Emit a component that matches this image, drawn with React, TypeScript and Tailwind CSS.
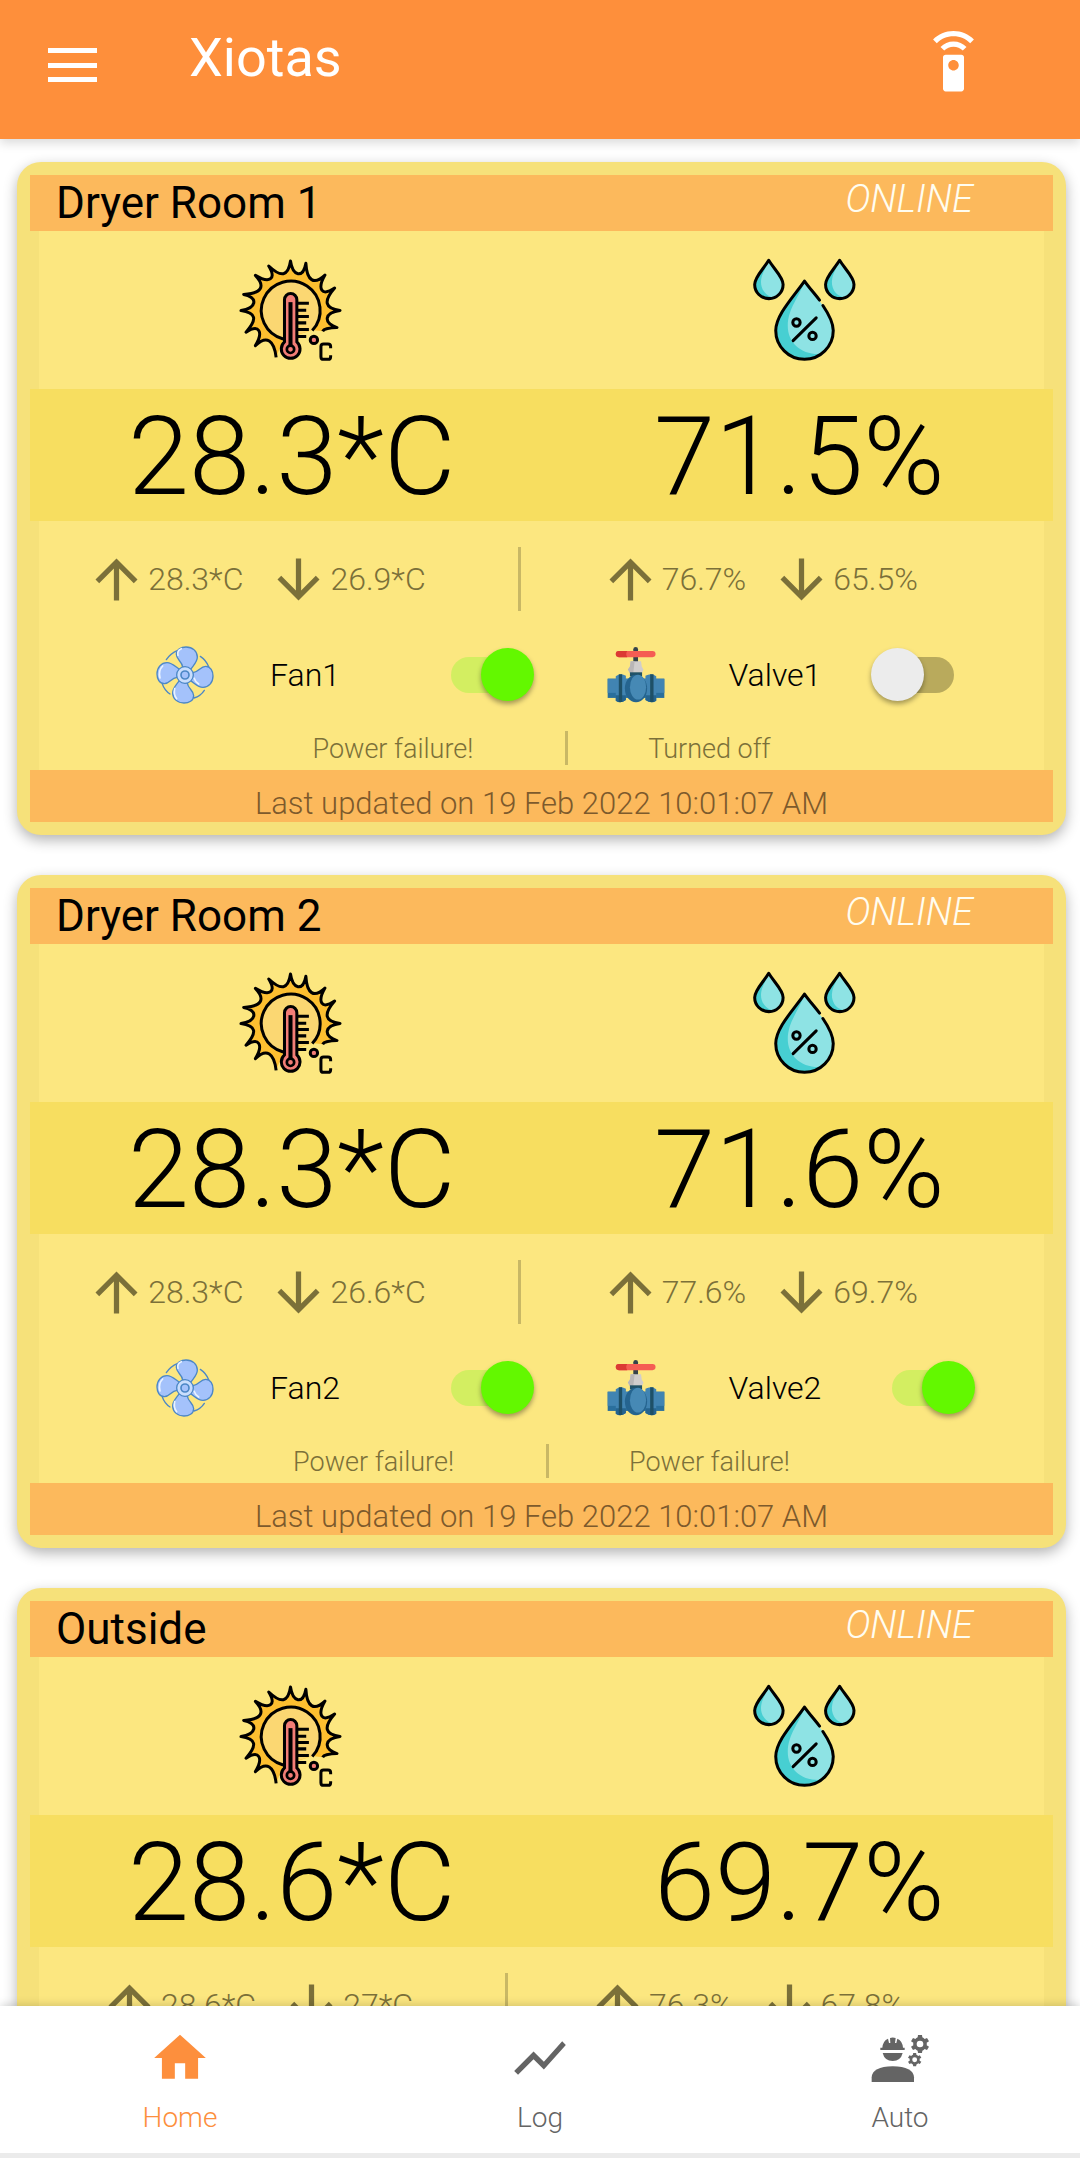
import React, { useState } from "react";
import {
  MdArrowDownward,
  MdArrowUpward,
  MdHome,
  MdSettingsRemote,
  MdShowChart,
} from "react-icons/md";

type Device = { kind: "fan" | "valve"; name: string; on: boolean; status: string };

type Room = {
  name: string;
  temp: string;
  tempMax: string;
  tempMin: string;
  hum: string;
  humMax: string;
  humMin: string;
  devices: Device[];
  updated?: string;
};

const rooms: Room[] = [
  {
    name: "Dryer Room 1",
    temp: "28.3*C",
    tempMax: "28.3*C",
    tempMin: "26.9*C",
    hum: "71.5%",
    humMax: "76.7%",
    humMin: "65.5%",
    devices: [
      { kind: "fan", name: "Fan1", on: true, status: "Power failure!" },
      { kind: "valve", name: "Valve1", on: false, status: "Turned off" },
    ],
    updated: "19 Feb 2022 10:01:07 AM",
  },
  {
    name: "Dryer Room 2",
    temp: "28.3*C",
    tempMax: "28.3*C",
    tempMin: "26.6*C",
    hum: "71.6%",
    humMax: "77.6%",
    humMin: "69.7%",
    devices: [
      { kind: "fan", name: "Fan2", on: true, status: "Power failure!" },
      { kind: "valve", name: "Valve2", on: true, status: "Power failure!" },
    ],
    updated: "19 Feb 2022 10:01:07 AM",
  },
  {
    name: "Outside",
    temp: "28.6*C",
    tempMax: "28.6*C",
    tempMin: "27*C",
    hum: "69.7%",
    humMax: "76.3%",
    humMin: "67.8%",
    devices: [],
  },
];

// Each ray is [tip angle, base angle]; the two differ where a ray curls.
const rayAngles = [
  [253, 245],
  [225, 222],
  [206, 199],
  [180, 180],
  [161, 154],
  [135, 132],
  [116, 110],
  [90, 90],
  [72, 65],
  [46, 43],
  [27, 20],
  [0, 0],
  [-20, -24],
];

function polar(angle: number, radius: number) {
  const rad = (angle * Math.PI) / 180;
  return `${Math.round(212 + radius * Math.cos(rad))} ${Math.round(212 - radius * Math.sin(rad))}`;
}

function sunRays() {
  let d = `M${polar(rayAngles[0][0], 146)}`;
  for (let i = 1; i < rayAngles.length; i++) {
    const [tip, base] = rayAngles[i];
    d += `C${polar(rayAngles[i - 1][1] - 4, 102)} ${polar(base + 4, 102)} ${polar(tip, 148)}`;
  }
  return `${d}Q${polar(-27, 114)} ${polar(-33, 114)}`;
}

const rays = sunRays();

function TemperatureIcon() {
  return (
    <svg viewBox="55 55 314 314" className="size-[105px]" fill="none" aria-hidden="true">
      <path d={`${rays}L277 270L190 300Z`} fill="#fdbf30" />
      <path d="M277 270A88 88 0 1 0 190 297Z" fill="#fbd772" />
      <path d={rays} stroke="#000" strokeWidth="9" strokeLinejoin="round" />
      <path d="M277 272A88 88 0 1 0 190 297" stroke="#000" strokeWidth="9" />
      <path
        d="M194 180a18 18 0 0 1 37 0V306a28 28 0 1 1-37 0Z"
        fill="#f27d76"
        stroke="#000"
        strokeWidth="9"
      />
      <path d="M212 187V316" stroke="#000" strokeWidth="12" />
      <circle cx="212" cy="328" r="11" fill="#f27d76" stroke="#000" strokeWidth="8" />
      <path
        d="M234 190H267M234 211H259M234 230H267M234 249H259M234 269H267M234 290H259"
        stroke="#000"
        strokeWidth="9"
      />
      <circle cx="282" cy="300" r="11" fill="#f27d76" stroke="#000" strokeWidth="9" />
      <path
        d="M332 325V320Q332 312 324 312H311Q303 312 303 320V350Q303 358 311 358H324Q332 358 332 350V346"
        stroke="#000"
        strokeWidth="9"
      />
    </svg>
  );
}

const smallDrop = "M115 62C100 87 73 112 73 134A42 42 0 0 0 158 134C158 112 130 87 115 62Z";

function SmallDrop() {
  return (
    <>
      <path d={smallDrop} fill="#8ee3e4" />
      <path d="M115 62C100 87 73 112 73 134A42 42 0 0 0 130 173C100 168 88 140 93 116C96 100 108 82 115 62Z" fill="#47cfd2" />
      <path d={smallDrop} stroke="#000" strokeWidth="9" strokeLinejoin="round" />
    </>
  );
}

function HumidityIcon() {
  return (
    <svg viewBox="65 55 314 314" className="size-[105px]" fill="none" aria-hidden="true">
      <SmallDrop />
      <g transform="translate(212 0)">
        <SmallDrop />
      </g>
      <path d="M222 124C190 170 136 225 136 272A86 86 0 0 0 308 272C308 225 254 170 222 124Z" fill="#8ee3e4" />
      <path d="M222 124C190 170 136 225 136 272A86 86 0 0 0 268 342C210 344 172 306 172 258C172 206 208 170 222 124Z" fill="#47cfd2" />
      <g stroke="#000" strokeWidth="9" strokeLinecap="round" strokeLinejoin="round">
        <path d="M267 181C252 161 236 144 222 124C190 170 136 225 136 272A86 86 0 0 0 308 272C308 247 294 222 277 197" />
        <path d="M188 302L257 234" />
        <circle cx="198" cy="248" r="11" />
        <circle cx="246" cy="288" r="11" />
      </g>
    </svg>
  );
}

function FanIcon() {
  return (
    <svg viewBox="76 76 174 174" className="size-[58px] shrink-0" fill="none" aria-hidden="true">
      <g stroke="#4c87c6" strokeWidth="4" strokeLinecap="round">
        <path d="M107 117Q120 98 140 90M209 107Q226 118 234 138M221 209Q210 226 190 232M95 190Q102 210 118 220" />
      </g>
      {[0, 90, 180, 270].map((a) => (
        <path
          key={a}
          d="M-7 -24C-9 -42 -26 -46 -26 -62C-26 -77 -11 -84 3 -84C23 -84 37 -71 37 -54C37 -39 26 -30 17 -17Z"
          transform={`translate(163 163) rotate(${a})`}
          fill="#a4c2fb"
          stroke="#4c87c6"
          strokeWidth="4"
          strokeLinejoin="round"
        />
      ))}
      <path
        d="M142 104Q138 90 152 84M88 172Q82 150 96 136M132 204Q128 222 138 234M190 172Q194 184 204 190"
        stroke="#eaf3ff"
        strokeWidth="5"
        strokeLinecap="round"
      />
      <circle cx="163" cy="163" r="25" fill="#c9defd" stroke="#4c87c6" strokeWidth="4" />
      <circle cx="163" cy="163" r="12" fill="#a4c2fb" stroke="#4c87c6" strokeWidth="5" />
    </svg>
  );
}

function ValveIcon() {
  return (
    <svg viewBox="52 78 172 172" className="size-[58px] shrink-0" aria-hidden="true">
      <path d="M130 88q0-7 7-7t7 7V126H130Z" fill="#35434b" />
      <rect x="78" y="93" width="118" height="18" rx="9" fill="#f55d53" />
      <path d="M87 93H112Q106 102 112 111H87a9 9 0 0 1 0-18Z" fill="#db3a34" />
      <path d="M122 123H153L155 139L160 148L156 157H119L114 148L120 139Z" fill="#d0cdcc" />
      <path d="M122 123H134L130 157H119L114 148L120 139Z" fill="#b9b6b6" />
      <rect x="120" y="156" width="36" height="12" fill="#205268" />
      <rect x="54" y="175" width="168" height="57" fill="#2a6f9c" />
      <rect x="54" y="175" width="168" height="42" fill="#4184b2" />
      <path d="M78 168Q92 156 108 166V238Q92 250 78 240ZM166 166Q184 156 198 168V240Q184 250 166 238Z" fill="#4184b2" />
      <path d="M78 224H108V238Q92 250 78 240ZM166 224H198V240Q184 250 166 238Z" fill="#25648f" />
      <ellipse cx="138" cy="204" rx="33" ry="41" fill="#25648f" />
      <ellipse cx="144" cy="200" rx="24" ry="37" fill="#4689b5" />
      <path d="M87 162H97V244H87ZM180 162H190V244H180Z" fill="#1e5067" />
    </svg>
  );
}

const gear =
  "M-6 -27H6L7 -20Q11 -18 14 -15L21 -18L27 -8L20 -4Q21 0 20 4L27 8L21 18L14 15Q11 18 7 20L6 27H-6L-7 20Q-11 18 -14 15L-21 18L-27 8L-20 4Q-21 0 -20 -4L-27 -8L-21 -18L-14 -15Q-11 -18 -7 -20ZM0 -10A10 10 0 1 0 0 10A10 10 0 1 0 0 -10Z";

function AutoIcon() {
  return (
    <svg viewBox="30 42 177 147" className="h-[49px] w-[59px]" fill="currentColor" aria-hidden="true">
      <path d="M64 83Q66 62 81 56L84 69H88L87 54Q95 51 104 54L102 69H106L109 56Q124 62 126 83H131V90H58V83Z" />
      <path d="M65 99H125Q119 123 95 123T65 99Z" />
      <path d="M32 186V172Q34 140 95 139Q157 140 159 172V186Z" />
      <path fillRule="evenodd" d={gear} transform="translate(177 72)" />
      <path fillRule="evenodd" d={gear} transform="translate(161 119) scale(.74)" />
    </svg>
  );
}

function Toggle({ label, initial }: { label: string; initial: boolean }) {
  const [on, setOn] = useState(initial);
  return (
    <span className="relative flex h-[54px] w-[104px] shrink-0 items-center justify-center">
      <input
        type="checkbox"
        role="switch"
        aria-label={label}
        checked={on}
        onChange={() => setOn(!on)}
        className="peer absolute inset-0 z-10 size-full cursor-pointer opacity-0"
      />
      <span className="h-9 w-[62px] rounded-full bg-[#b9aa5c] peer-checked:bg-[#d3ee61]" />
      <span className="absolute left-0 size-[53px] rounded-full bg-[#ececec] shadow-[0_3px_5px_rgba(0,0,0,0.35)] peer-checked:left-auto peer-checked:right-0 peer-checked:bg-[#63f800]" />
    </span>
  );
}

function DeviceControl({ device }: { device: Device }) {
  if (device.kind === "fan") {
    return (
      <div className="flex items-center pl-[117px]">
        <FanIcon />
        <span className="ml-14 w-40">{device.name}</span>
        <Toggle label={device.name} initial={device.on} />
      </div>
    );
  }
  return (
    <div className="flex items-center pl-[65px]">
      <ValveIcon />
      <span className="ml-16 w-[142px]">{device.name}</span>
      <Toggle label={device.name} initial={device.on} />
    </div>
  );
}

function Extremes({ max, min }: { max: string; min: string }) {
  return (
    <div className="flex items-center">
      <MdArrowUpward className="size-[63px]" aria-label="Highest" />
      <span>{max}</span>
      <MdArrowDownward className="ml-6 size-[63px]" aria-label="Lowest" />
      <span>{min}</span>
    </div>
  );
}

function RoomCard({ room }: { room: Room }) {
  return (
    <section className="rounded-3xl bg-[#f6e17a] p-[13px] shadow-[0_5px_14px_rgba(0,0,0,0.3)]">
      <header className="flex h-14 items-center justify-between bg-[#fcb95c] pr-20 pl-[26px]">
        <h2 className="text-[44px] leading-none text-black">{room.name}</h2>
        <span className="pb-2 text-[38px] leading-none font-light text-[#fffdf0] italic">ONLINE</span>
      </header>

      <div className="mx-[9px] grid h-[158px] grid-cols-2 items-center justify-items-center bg-[#fce780]">
        <TemperatureIcon />
        <div className="pl-6">
          <HumidityIcon />
        </div>
      </div>

      <div className="grid h-[132px] grid-cols-2 items-center justify-items-center bg-[#f7de60] pt-1 pl-2 text-[110px] leading-none font-light text-black">
        <span>{room.temp}</span>
        <span>{room.hum}</span>
      </div>

      <div className="mx-[9px] bg-[#fce780]">
        <div className="flex h-[116px] items-center justify-center pr-20 text-[32px] leading-none font-light text-[#7b7039]">
          <Extremes max={room.tempMax} min={room.tempMin} />
          <span className="mr-[78px] ml-[92px] h-16 w-[3px] bg-[#c9b865]" />
          <Extremes max={room.humMax} min={room.humMin} />
        </div>

        {room.devices.length > 0 && (
          <>
            <div className="grid h-[76px] grid-cols-2 items-center pb-px text-[32px] leading-none font-light text-black">
              {room.devices.map((device) => (
                <DeviceControl key={device.name} device={device} />
              ))}
            </div>

            <div className="flex items-end justify-center pt-[18px] pb-[5px] text-[27px] font-light text-[#7b7039]">
              <span className="leading-8">{room.devices[0].status}</span>
              <span className="mr-20 ml-[92px] h-[34px] w-[3px] bg-[#c9b865]" />
              <span className="leading-8">{room.devices[1].status}</span>
            </div>
          </>
        )}
      </div>

      {room.updated && (
        <footer className="flex h-[52px] items-end justify-center bg-[#fcb95c] text-[31px] leading-9 font-light text-[#7d5a2c]">
          Last updated on {room.updated}
        </footer>
      )}
    </section>
  );
}

export default function App() {
  return (
    <div className="flex h-screen flex-col overflow-hidden bg-white font-[Roboto,'Liberation_Sans',sans-serif]">
      <header className="relative z-10 flex h-[139px] shrink-0 bg-[#fe8f3b] pr-[95px] pl-12 text-white shadow-[0_4px_10px_rgba(0,0,0,0.15)]">
        <button type="button" aria-label="Menu" className="mt-12 flex h-[34px] w-[49px] flex-col justify-between">
          <span className="h-[5px] w-full bg-white" />
          <span className="h-[5px] w-full bg-white" />
          <span className="h-[5px] w-full bg-white" />
        </button>
        <h1 className="mt-7 ml-[92px] text-[54px] leading-[60px]">Xiotas</h1>
        <button type="button" aria-label="Remote control" className="mt-[31px] ml-auto size-[63px]">
          <MdSettingsRemote className="size-[63px]" />
        </button>
      </header>

      <main className="flex min-h-0 flex-1 flex-col gap-10 overflow-y-auto pt-[23px] pr-[14px] pl-[17px] [scrollbar-width:none]">
        {rooms.map((room) => (
          <RoomCard key={room.name} room={room} />
        ))}
      </main>

      <nav className="relative z-10 grid h-[152px] shrink-0 grid-cols-3 border-b-[5px] border-[#ebebeb] bg-white text-[28px] leading-8 font-light text-[#646464] shadow-[0_-2px_8px_rgba(0,0,0,0.15)]">
        <a href="#home" className="flex flex-col items-center pt-[21px] text-[#fd8f3d]">
          <MdHome className="size-[62px]" />
          <span className="mt-[13px]">Home</span>
        </a>
        <a href="#log" className="flex flex-col items-center pt-[21px]">
          <MdShowChart className="size-[62px]" />
          <span className="mt-[13px]">Log</span>
        </a>
        <a href="#auto" className="flex flex-col items-center pt-[21px]">
          <span className="flex h-[62px] items-center">
            <AutoIcon />
          </span>
          <span className="mt-[13px]">Auto</span>
        </a>
      </nav>
    </div>
  );
}
